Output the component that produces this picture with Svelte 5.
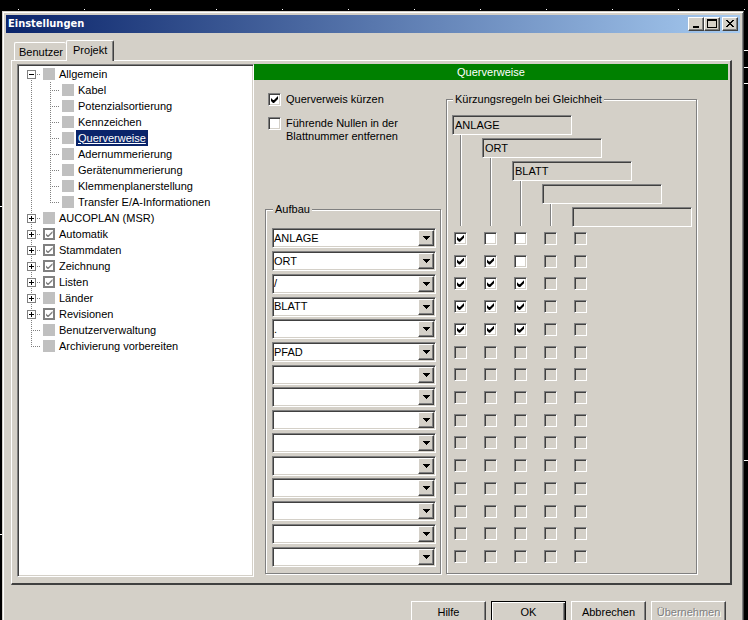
<script lang="ts">
	type TreeNode = {
		label: string;
		checked?: boolean;
		open?: boolean;
		expandable?: boolean;
		children?: TreeNode[];
	};

	let nodes: TreeNode[] = $state([
		{
			label: 'Allgemein',
			open: true,
			expandable: true,
			children: [
				{ label: 'Kabel' },
				{ label: 'Potenzialsortierung' },
				{ label: 'Kennzeichen' },
				{ label: 'Querverweise' },
				{ label: 'Adernummerierung' },
				{ label: 'Gerätenummerierung' },
				{ label: 'Klemmenplanerstellung' },
				{ label: 'Transfer E/A-Informationen' }
			]
		},
		{ label: 'AUCOPLAN (MSR)', expandable: true },
		{ label: 'Automatik', expandable: true, checked: true },
		{ label: 'Stammdaten', expandable: true, checked: true },
		{ label: 'Zeichnung', expandable: true, checked: true },
		{ label: 'Listen', expandable: true, checked: true },
		{ label: 'Länder', expandable: true },
		{ label: 'Revisionen', expandable: true, checked: true },
		{ label: 'Benutzerverwaltung' },
		{ label: 'Archivierung vorbereiten' }
	]);

	const PARTS = ['', 'ANLAGE', 'ORT', '/', 'BLATT', '.', 'PFAD'];
	const ROW_COUNT = 15;

	let tab = $state('Projekt');
	let selected = $state('Querverweise');
	let shorten = $state(true);
	let stripZeros = $state(false);

	let parts = $state(
		Array.from({ length: ROW_COUNT }, (_, i) => ['ANLAGE', 'ORT', '/', 'BLATT', '.', 'PFAD'][i] ?? '')
	);
	const keys = ['ANLAGE', 'ORT', 'BLATT', '', ''];

	// one row per part, one column per key
	let rules = $state(
		Array.from({ length: ROW_COUNT }, (_, row) =>
			keys.map((_, col) => row < 5 && col < 3 && col <= row)
		)
	);

	function ruleEnabled(row: number, col: number) {
		return row < 5 && keys[col] !== '';
	}
</script>

{#snippet branch(items: TreeNode[])}
	<ul>
		{#each items as node}
			<li>
				<div class="node">
					<span class="twig">
						{#if node.expandable}
							<button
								type="button"
								class="expander"
								aria-label={node.label}
								aria-expanded={!!node.open}
								onclick={() => (node.open = !node.open)}
							>
								<svg width="7" height="7" viewBox="0 0 7 7" shape-rendering="crispEdges">
									<path d="M1 3h5v1H1z" />
									{#if !node.open}<path d="M3 1h1v5H3z" />{/if}
								</svg>
							</button>
						{/if}
					</span>
					{#if node.checked !== undefined}
						<input type="checkbox" class="mark" aria-label={node.label} bind:checked={node.checked} />
					{:else}
						<span class="square"></span>
					{/if}
					<button
						type="button"
						class="name"
						class:selected={selected === node.label}
						onclick={() => (selected = node.label)}>{node.label}</button
					>
				</div>
				{#if node.children && node.open}
					{@render branch(node.children)}
				{/if}
			</li>
		{/each}
	</ul>
{/snippet}

<div class="desktop">
	<div class="window">
		<header class="titlebar">
			<h1>Einstellungen</h1>
			<button type="button" class="sys" aria-label="Minimieren">
				<svg width="12" height="10" viewBox="0 0 12 10" shape-rendering="crispEdges"><path d="M3 7h6v2H3z" /></svg>
			</button>
			<button type="button" class="sys" aria-label="Maximieren">
				<svg width="12" height="10" viewBox="0 0 12 10" shape-rendering="crispEdges">
					<path fill-rule="evenodd" d="M1 0h10v9H1zM2 2v6h8V2z" />
				</svg>
			</button>
			<button type="button" class="sys close" aria-label="Schließen">
				<svg width="12" height="10" viewBox="0 0 12 10" shape-rendering="crispEdges">
					<path
						d="M2 1h2v1h1v1h2v-1h1v-1h2v1h-1v1h-1v1h-1v1h1v1h1v1h1v1h-2v-1h-1v-1h-2v1h-1v1h-2v-1h1v-1h1v-1h1v-1h-1v-1h-1v-1h-1z"
					/>
				</svg>
			</button>
		</header>

		<div class="tabs" role="tablist">
			{#each ['Benutzer', 'Projekt'] as name}
				<button
					type="button"
					role="tab"
					class="tab"
					class:active={tab === name}
					aria-selected={tab === name}
					onclick={() => (tab = name)}>{name}</button
				>
			{/each}
		</div>

		<div class="panel">
			<nav class="tree">
				{@render branch(nodes)}
			</nav>

			<section class="pane">
				<h2>{selected}</h2>
				<div class="content">
					<div class="left">
						<label class="option">
							<input type="checkbox" class="check" bind:checked={shorten} />
							<span>Querverweis kürzen</span>
						</label>
						<label class="option">
							<input type="checkbox" class="check" bind:checked={stripZeros} />
							<span>Führende Nullen in der Blattnummer entfernen</span>
						</label>

						<fieldset class="structure">
							<legend>Aufbau</legend>
							<div class="rows">
								{#each parts as _, i}
									<div class="combo">
										<select aria-label="Aufbau {i + 1}" bind:value={parts[i]}>
											{#each PARTS as part}
												<option value={part}>{part}</option>
											{/each}
										</select>
										<span class="arrow">
											<svg width="7" height="4" viewBox="0 0 7 4" shape-rendering="crispEdges">
												<path d="M0 0h7v1H6v1H5v1H4v1H3V3H2V2H1V1H0z" />
											</svg>
										</span>
									</div>
								{/each}
							</div>
						</fieldset>
					</div>

					<fieldset class="rules">
						<legend>Kürzungsregeln bei Gleichheit</legend>
						<div class="stairs">
							{#each keys as key, i}
								<input
									type="text"
									class="key"
									readonly
									aria-label="Regel {i + 1}"
									value={key}
									style="grid-area: {i + 1} / {i + 1} / auto / span 4"
								/>
								{#if i < keys.length - 1}
									<span class="stem" style="grid-area: {i + 1} / {i + 1} / 6 / auto"></span>
								{/if}
							{/each}
						</div>
						<div class="rows">
							{#each rules as rule, row}
								<div class="rule">
									{#each rule as _, col}
										<input
											type="checkbox"
											class="check"
											aria-label="Zeile {row + 1}, Regel {col + 1}"
											disabled={!ruleEnabled(row, col)}
											bind:checked={rule[col]}
										/>
									{/each}
								</div>
							{/each}
						</div>
					</fieldset>
				</div>
			</section>
		</div>

		<footer>
			<button type="button" class="btn">Hilfe</button>
			<button type="button" class="btn default">OK</button>
			<button type="button" class="btn">Abbrechen</button>
			<button type="button" class="btn" disabled>Übernehmen</button>
		</footer>
	</div>
</div>

<style>
	:global(body) {
		background: #000;
		overflow: hidden;
	}

	.desktop {
		box-sizing: border-box;
		min-height: 100vh;
		padding: 11px 4px 0 2px;
		font-family: 'Liberation Sans', Arial, sans-serif;
		font-size: 11px;
		line-height: 13px;
		color: #000;
		background:
			linear-gradient(90deg, #fff 1px, transparent 1px) 18px 9px / 66px 1px repeat-x,
			linear-gradient(#fff, #fff) right 50px / 4px 1px no-repeat,
			linear-gradient(#fff, #fff) right 67px / 4px 1px no-repeat,
			linear-gradient(#fff, #fff) right 83px / 4px 1px no-repeat,
			linear-gradient(#fff, #fff) right 460px / 4px 1px no-repeat,
			linear-gradient(#fff, #fff) 0 206px / 2px 1px no-repeat,
			linear-gradient(#fff, #fff) 0 534px / 2px 1px no-repeat,
			#000;
	}

	button,
	select,
	input {
		box-sizing: border-box;
		margin: 0;
		padding: 0;
		border: 0;
		border-radius: 0;
		font: inherit;
		color: inherit;
	}

	svg {
		display: block;
	}

	.window {
		background: #d4d0c8;
		border: 1px solid #d4d0c8;
		border-right-color: #404040;
		box-shadow: inset 1px 1px #fff, inset -1px 0 #808080;
		padding: 3px 3px 12px;
	}

	/* title bar */
	.titlebar {
		display: flex;
		align-items: center;
		height: 18px;
		padding: 0 2px;
		background: linear-gradient(90deg, #0a246a, #a6caf0);
	}

	h1 {
		flex: 1;
		margin: 0;
		font: bold 11px/18px 'DejaVu Sans Condensed', 'DejaVu Sans', sans-serif;
		color: #fff;
	}

	.sys,
	.arrow,
	.btn {
		background: #d4d0c8;
		border: 1px solid;
		border-color: #fff #404040 #404040 #fff;
		box-shadow: inset -1px -1px #808080;
	}

	.sys {
		width: 16px;
		height: 14px;
		padding: 1px;
	}

	.sys.close {
		margin-left: 2px;
	}

	/* tabs */
	.tabs {
		display: flex;
		align-items: flex-end;
		margin-top: 7px;
		padding-left: 8px;
	}

	.tab {
		height: 18px;
		padding: 2px 3px 0 4px;
		background: #d4d0c8;
		border: solid #fff;
		border-width: 1px 0 0 1px;
		border-radius: 2px 2px 0 0;
	}

	.tab.active {
		height: 21px;
		margin-bottom: -1px;
		padding: 0 6px 2px;
		border-right: 1px solid #404040;
		box-shadow: inset -1px 0 #808080;
		z-index: 1;
	}

	.panel {
		display: flex;
		margin: 0 8px 0 5px;
		padding: 3px 2px 6px 5px;
		border: solid;
		border-width: 1px 2px 2px 1px;
		border-color: #fff #404040 #404040 #fff;
	}

	/* tree */
	.tree {
		box-sizing: border-box;
		flex: 0 0 237px;
		padding-left: 8px;
		background: #fff;
		border: 1px solid;
		border-color: #808080 #fff #fff #808080;
		box-shadow: inset 1px 1px #404040, inset -1px -1px #d4d0c8;
		padding-top: 1px;
	}

	ul {
		list-style: none;
		margin: 0;
		padding: 0;
	}

	li {
		background: repeating-linear-gradient(#808080 0 1px, transparent 1px 2px) 5px 0 / 1px 100% no-repeat;
	}

	.tree > ul > li:first-child {
		background-position-y: 8px;
	}

	li:last-child {
		background-size: 1px 8px;
	}

	li :global(ul) {
		padding-left: 19px;
	}

	.node {
		display: flex;
		align-items: center;
		height: 16px;
		background: repeating-linear-gradient(90deg, #808080 0 1px, transparent 1px 2px) 5px 8px / 9px 1px no-repeat;
	}

	.twig {
		width: 17px;
		padding-left: 1px;
		box-sizing: border-box;
	}

	.expander {
		display: block;
		width: 9px;
		height: 9px;
		background: #fff;
		border: 1px solid #808080;
	}

	.square,
	.mark {
		width: 12px;
		height: 12px;
		background: #c0c0c0;
	}

	.mark {
		appearance: none;
		display: grid;
		place-items: center;
		background: #fff;
		border: 2px solid #808080;
	}

	.name {
		height: 16px;
		margin-left: 2px;
		padding: 0 2px;
		background: none;
		white-space: nowrap;
	}

	.name.selected {
		background: #0a246a;
		color: #fff;
		text-decoration: underline;
	}

	/* settings pane */
	.pane {
		flex: 1;
	}

	h2 {
		margin: 0;
		font-size: 11px;
		font-weight: normal;
		line-height: 16px;
		text-align: center;
		color: #fff;
		background: #008000;
	}

	.content {
		display: flex;
		gap: 5px;
		padding: 13px 11px 3px;
	}

	.left {
		display: flex;
		flex-direction: column;
		flex: 0 0 176px;
	}

	.option {
		display: flex;
		gap: 5px;
		margin: 0 40px 11px 3px;
	}

	.check {
		appearance: none;
		display: grid;
		place-items: center;
		flex: none;
		width: 13px;
		height: 13px;
		background: #fff;
		border: 1px solid;
		border-color: #808080 #fff #fff #808080;
		box-shadow: inset 1px 1px #404040, inset -1px -1px #d4d0c8;
	}

	.check:disabled {
		background: #d4d0c8;
	}

	.check:checked::before {
		content: '';
		width: 7px;
		height: 7px;
		background: #000;
		clip-path: polygon(0 2px, 0 5px, 2px 7px, 3px 7px, 7px 3px, 7px 0, 3px 4px, 2px 4px);
	}

	.mark:checked::before {
		content: '';
		width: 7px;
		height: 6px;
		background: #808080;
		clip-path: polygon(0 2px, 0 4px, 2px 6px, 3px 6px, 7px 2px, 7px 0, 3px 4px, 2px 4px);
	}

	fieldset {
		min-width: 0;
		margin: 0;
		padding: 0 4px 5px 5px;
		border: 1px solid #808080;
		box-shadow: 1px 1px #fff, inset 1px 1px #fff;
	}

	legend {
		margin-left: 1px;
		padding: 0 2px;
		background: #d4d0c8;
	}

	.structure {
		margin-top: auto;
		padding-left: 6px;
	}

	.structure .rows {
		margin-top: 11px;
	}

	.rows {
		display: grid;
		grid-template-rows: repeat(15, 1fr);
		align-items: center;
		min-height: 341px;
	}

	.combo {
		display: grid;
		grid-template-columns: 1fr 16px 2px;
		align-items: center;
	}

	.combo select {
		appearance: none;
		grid-area: 1 / 1 / 2 / 4;
		height: 20px;
		padding-left: 1px;
		background: #fff;
		border: 1px solid;
		border-color: #808080 #fff #fff #808080;
		box-shadow: inset 1px 1px #404040, inset -1px -1px #d4d0c8;
	}

	.arrow {
		grid-area: 1 / 2;
		display: grid;
		place-items: center;
		box-sizing: border-box;
		height: 16px;
		pointer-events: none;
	}

	.stairs {
		display: grid;
		grid-template-columns: repeat(8, 30px);
		grid-auto-rows: 20px;
		row-gap: 3px;
		margin-top: 9px;
	}

	.key {
		width: 100%;
		padding-left: 2px;
		background: #d4d0c8;
		border: 1px solid;
		border-color: #808080 #fff #fff #808080;
		box-shadow: inset 1px 1px #404040;
		outline: none;
	}

	.stem {
		width: 1px;
		margin: 20px 0 1px 8px;
		background: #808080;
		box-shadow: 1px 0 #fff;
	}

	.rule {
		display: grid;
		grid-template-columns: repeat(5, 30px);
		padding-left: 2px;
	}

	/* dialog buttons */
	footer {
		display: flex;
		justify-content: flex-end;
		gap: 5px;
		margin: 16px 14px 0 0;
	}

	.btn {
		width: 75px;
		height: 23px;
	}

	.btn.default {
		border-color: #000;
		box-shadow: inset 1px 1px #fff, inset -1px -1px #404040, inset -2px -2px #808080;
	}

	.btn:disabled {
		color: #808080;
		text-shadow: 1px 1px #fff;
	}
</style>
